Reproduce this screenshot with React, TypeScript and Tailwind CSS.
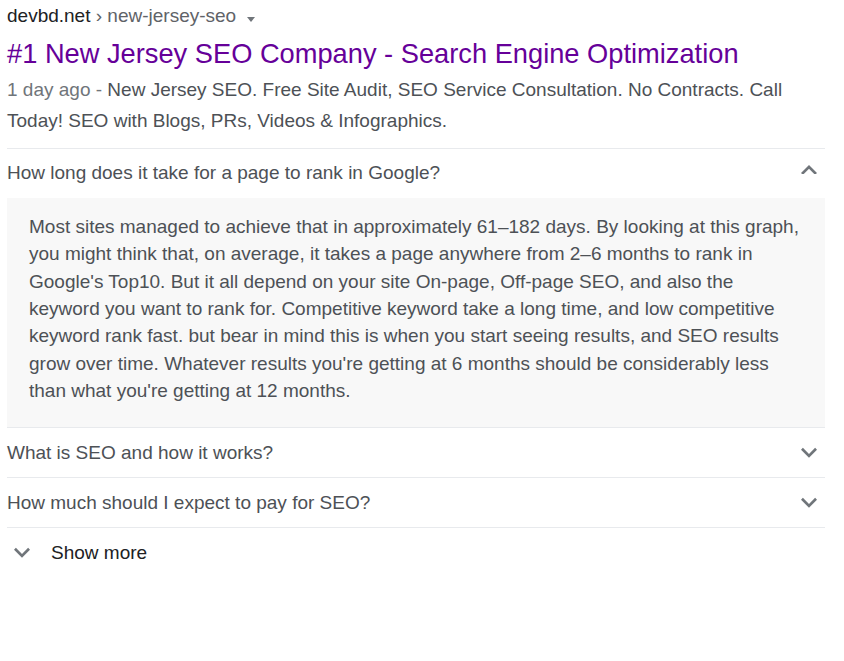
import React from "react";

function ChevronDown({ className = "" }: { className?: string }) {
  return (
    <svg className={className} width="16" height="10.67" viewBox="6 8 12 8" fill="#70757a">
      <path d="M16.59 8.59L12 13.17 7.41 8.59 6 10l6 6 6-6z" />
    </svg>
  );
}

function ChevronUp({ className = "" }: { className?: string }) {
  return (
    <svg className={className} width="16" height="9.88" viewBox="6 8 12 7.41" fill="#70757a">
      <path d="M12 8l-6 6 1.41 1.41L12 10.83l4.59 4.58L18 14z" />
    </svg>
  );
}

const answer =
  "Most sites managed to achieve that in approximately 61–182 days. By looking at this graph, you might think that, on average, it takes a page anywhere from 2–6 months to rank in Google's Top10. But it all depend on your site On-page, Off-page SEO, and also the keyword you want to rank for. Competitive keyword take a long time, and low competitive keyword rank fast. but bear in mind this is when you start seeing results, and SEO results grow over time. Whatever results you're getting at 6 months should be considerably less than what you're getting at 12 months.";

export default function App() {
  return (
    <div className="w-[844px] h-[661px] bg-white pl-[7px] pr-[19px] font-['Liberation_Sans',Arial,sans-serif]">
      <div className="h-[36px] flex items-start text-[19px] leading-[32px]">
        <span className="text-[#202124]">devbd.net</span>
        <span className="text-[#5f6368]">&nbsp;› new-jersey-seo</span>
        <span className="ml-[11px] mt-[17px] w-0 h-0 border-l-[4.5px] border-r-[4.5px] border-t-[5px] border-l-transparent border-r-transparent border-t-[#70757a]" />
      </div>
      <div className="text-[27.25px] leading-[35px] text-[#660099] whitespace-nowrap">
        #1 New Jersey SEO Company - Search Engine Optimization
      </div>
      <p className="mt-[3px] text-[19px] leading-[31px] text-[#4d5156]">
        <span className="text-[#70757a]">1 day ago - </span>New Jersey SEO. Free Site Audit, SEO Service Consultation. No Contracts. Call Today! SEO with Blogs, PRs, Videos &amp; Infographics.
      </p>

      <div className="mt-[12px] border-t border-[#e8eaed]">
        <div className="h-[49px] flex items-center justify-between text-[19px] text-[#4d5156]">
          <span>How long does it take for a page to rank in Google?</span>
          <ChevronUp className="mr-[8px] mb-[8px]" />
        </div>
        <div className="bg-[#f8f8f8] pl-[22px] pr-[19px] pt-[15px] pb-[23px] text-[19px] leading-[27.33px] text-[#4d5156]">
          {answer}
        </div>
      </div>

      <div className="border-t border-[#e8eaed]">
        <div className="h-[49px] flex items-center justify-between text-[19px] text-[#4d5156]">
          <span>What is SEO and how it works?</span>
          <ChevronDown className="mr-[8px]" />
        </div>
      </div>

      <div className="border-t border-[#e8eaed]">
        <div className="h-[49px] flex items-center justify-between text-[19px] text-[#4d5156]">
          <span>How much should I expect to pay for SEO?</span>
          <ChevronDown className="mr-[8px]" />
        </div>
      </div>

      <div className="border-t border-[#e8eaed]">
        <div className="h-[49px] flex items-center text-[19px] text-[#202124]">
          <ChevronDown className="ml-[7px]" />
          <span className="ml-[21px]">Show more</span>
        </div>
      </div>
    </div>
  );
}
